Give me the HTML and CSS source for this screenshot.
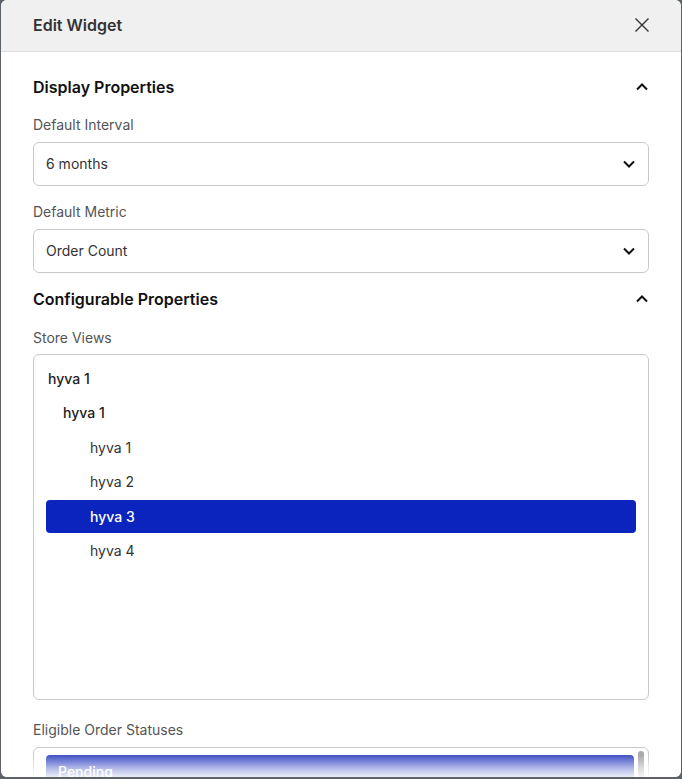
FILE: index.html
```html
<!DOCTYPE html>
<html>
<head>
<meta charset="utf-8">
<link rel="stylesheet" href="styles.css">
</head>
<body>
<div class="modal">
  <div class="header">
    <span class="title">Edit Widget</span>
    <svg class="close" width="16" height="16" viewBox="0 0 16 16"><path d="M1.5 1.5L14.5 14.5M14.5 1.5L1.5 14.5" stroke="#333" stroke-width="1.4" fill="none"/></svg>
  </div>
  <div class="body">
    <div class="section-head">
      <span>Display Properties</span>
      <svg width="14" height="10" viewBox="0 0 14 10"><path d="M2 7.5L7 2.5L12 7.5" stroke="#111" stroke-width="2" fill="none"/></svg>
    </div>
    <div class="label label-first">Default Interval</div>
    <div class="select">
      <span>6 months</span>
      <svg width="14" height="10" viewBox="0 0 14 10"><path d="M2 2.5L7 7.5L12 2.5" stroke="#111" stroke-width="2" fill="none"/></svg>
    </div>
    <div class="label">Default Metric</div>
    <div class="select">
      <span>Order Count</span>
      <svg width="14" height="10" viewBox="0 0 14 10"><path d="M2 2.5L7 7.5L12 2.5" stroke="#111" stroke-width="2" fill="none"/></svg>
    </div>
    <div class="section-head section-second">
      <span>Configurable Properties</span>
      <svg width="14" height="10" viewBox="0 0 14 10"><path d="M2 7.5L7 2.5L12 7.5" stroke="#111" stroke-width="2" fill="none"/></svg>
    </div>
    <div class="label label-store">Store Views</div>
    <div class="listbox tall">
      <div class="opt lvl0 strong">hyva 1</div>
      <div class="opt lvl1 strong">hyva 1</div>
      <div class="opt lvl2">hyva 1</div>
      <div class="opt lvl2">hyva 2</div>
      <div class="opt lvl2 selected">hyva 3</div>
      <div class="opt lvl2">hyva 4</div>
    </div>
    <div class="label label-big">Eligible Order Statuses</div>
    <div class="listbox short">
      <div class="opt lvl1b selected">Pending</div>
      <div class="scrollbar"></div>
    </div>
  </div>
  <div class="fade"></div>
</div>
</body>
</html>
```

FILE: styles.css
```css
html, body {
  margin: 0;
  padding: 0;
  background: #5d6168;
  height: 779px;
  overflow: hidden;
}
body {
  font-family: Inter, "Noto Sans", sans-serif;
  color: #222;
}
.modal {
  position: relative;
  margin: 0 1px;
  height: 777px;
  background: #fff;
  border-radius: 6px;
  overflow: hidden;
}
.header {
  height: 52px;
  background: #f0f0f0;
  border-bottom: 1px solid #dcdcdc;
  display: flex;
  align-items: center;
  justify-content: space-between;
  padding: 0 31px 0 32px;
  box-sizing: border-box;
}
.title {
  font-size: 16px;
  font-weight: 600;
  color: #333;
  margin-top: -1px;
}
.close {
  margin-top: -1px;
}
.body {
  padding: 0 32px 0 32px;
}
.section-head {
  display: flex;
  align-items: center;
  justify-content: space-between;
  font-size: 16px;
  font-weight: 600;
  color: #111;
  height: 24px;
  margin-top: 23px;
  padding-right: 1px;
}
.section-head svg {
  margin-right: -1px;
}
.section-second {
  margin-top: 14px;
}
.label {
  font-size: 14px;
  color: #555;
  height: 20px;
  line-height: 20px;
  margin-top: 16px;
  margin-bottom: 7px;
}
.label-first {
  margin-top: 16px;
}
.label-store {
  margin-top: 17px;
  margin-bottom: 6px;
}
.label-big {
  margin-top: 20px;
  margin-bottom: 7px;
}
.select {
  height: 44px;
  box-sizing: border-box;
  border: 1px solid #c9c9c9;
  border-radius: 6px;
  display: flex;
  align-items: center;
  justify-content: space-between;
  padding: 0 12px 0 12px;
  font-size: 14px;
  color: #333;
}
.select span {
  margin-top: -2px;
}
.listbox {
  position: relative;
  border: 1px solid #c9c9c9;
  border-radius: 6px;
  box-sizing: border-box;
  padding: 7px 12px 7px 12px;
}
.tall {
  height: 346px;
  padding-top: 6px;
}
.short {
  height: 60px;
}
.opt {
  height: 34.5px;
  display: flex;
  align-items: center;
  font-size: 14px;
  color: #333;
  border-radius: 4px;
  box-sizing: border-box;
}
.strong {
  font-weight: 500;
  color: #222;
}
.lvl0 { padding-left: 2px; }
.lvl1 { padding-left: 17px; }
.lvl2 { padding-left: 44px; }
.lvl1b { padding-left: 12px; }
.selected {
  background: #0a24bd;
  color: #fff;
  height: 33px;
  margin: 0.75px 0;
  font-weight: 500;
}
.short .selected {
  background: #3f51c6;
  margin: 0;
  margin-right: 2px;
}
.scrollbar {
  position: absolute;
  right: 4px;
  top: 3px;
  width: 6px;
  height: 60px;
  border-radius: 3px;
  background: #a9a9a9;
}
.fade {
  position: absolute;
  left: 0;
  right: 0;
  bottom: 0;
  height: 22px;
  background: linear-gradient(to bottom, rgba(255,255,255,0) 0%, rgba(255,255,255,0.6) 60%, rgba(255,255,255,0.9) 100%);
}
```
